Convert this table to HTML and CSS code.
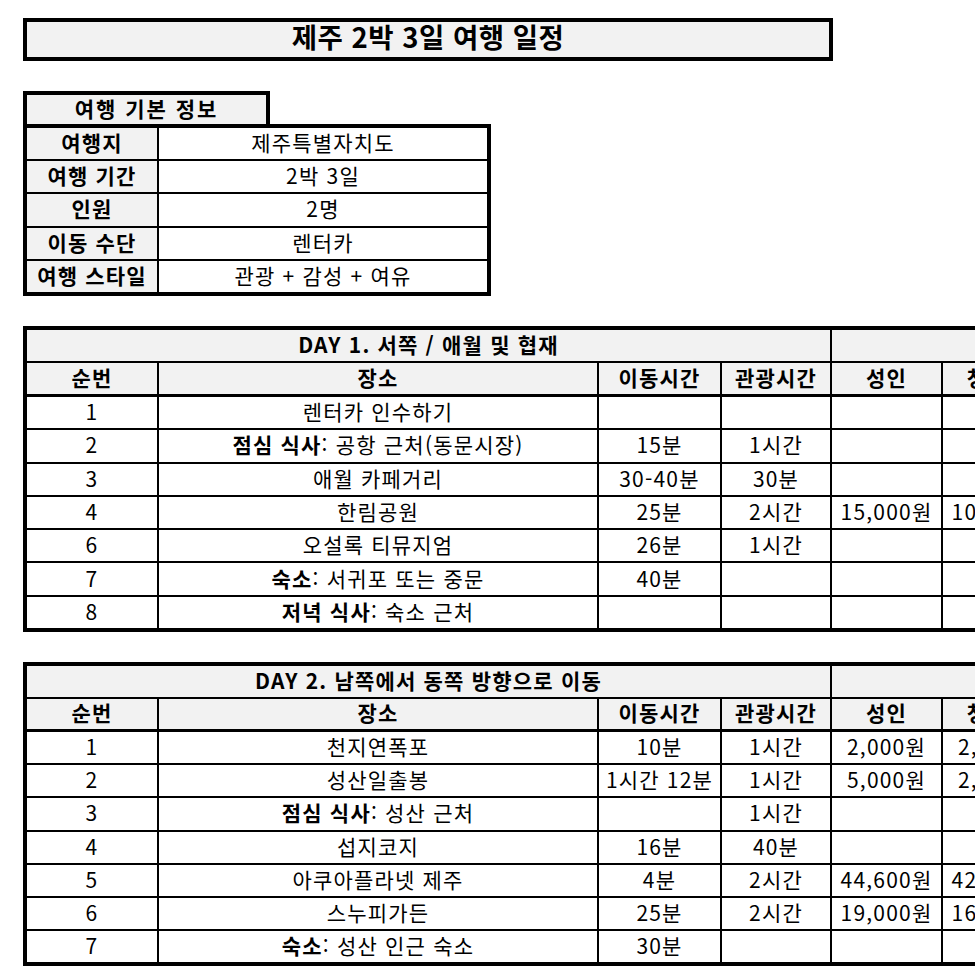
FILE: index.html
```html
<!DOCTYPE html>
<html lang="ko">
<head>
<meta charset="utf-8">
<title>제주 2박 3일 여행 일정</title>
<link rel="stylesheet" href="styles.css">
</head>
<body>
<div class="page">
  <div class="title">제주 2박 3일 여행 일정</div>

  <section class="info">
    <div class="info-head">여행 기본 정보</div>
    <div class="info-grid">
      <div class="cell lab">여행지</div><div class="cell">제주특별자치도</div>
      <div class="cell lab">여행 기간</div><div class="cell">2박 3일</div>
      <div class="cell lab">인원</div><div class="cell">2명</div>
      <div class="cell lab">이동 수단</div><div class="cell">렌터카</div>
      <div class="cell lab">여행 스타일</div><div class="cell">관광 + 감성 + 여유</div>
    </div>
  </section>

  <section class="day">
    <div class="cell hd day-title">DAY 1. 서쪽 / 애월 및 협재</div>
    <div class="cell hd day-fee"></div>
    <div class="cell hd colhd">순번</div><div class="cell hd colhd">장소</div><div class="cell hd colhd">이동시간</div><div class="cell hd colhd">관광시간</div><div class="cell hd colhd">성인</div><div class="cell hd colhd">청소년</div>

    <div class="cell">1</div><div class="cell">렌터카 인수하기</div><div class="cell"></div><div class="cell"></div><div class="cell"></div><div class="cell"></div>
    <div class="cell">2</div><div class="cell"><b>점심 식사</b>: 공항 근처(동문시장)</div><div class="cell">15분</div><div class="cell">1시간</div><div class="cell"></div><div class="cell"></div>
    <div class="cell">3</div><div class="cell">애월 카페거리</div><div class="cell">30-40분</div><div class="cell">30분</div><div class="cell"></div><div class="cell"></div>
    <div class="cell">4</div><div class="cell">한림공원</div><div class="cell">25분</div><div class="cell">2시간</div><div class="cell">15,000원</div><div class="cell">10,000원</div>
    <div class="cell">6</div><div class="cell">오설록 티뮤지엄</div><div class="cell">26분</div><div class="cell">1시간</div><div class="cell"></div><div class="cell"></div>
    <div class="cell">7</div><div class="cell"><b>숙소</b>: 서귀포 또는 중문</div><div class="cell">40분</div><div class="cell"></div><div class="cell"></div><div class="cell"></div>
    <div class="cell">8</div><div class="cell"><b>저녁 식사</b>: 숙소 근처</div><div class="cell"></div><div class="cell"></div><div class="cell"></div><div class="cell"></div>
  </section>

  <section class="day day-two">
    <div class="cell hd day-title">DAY 2. 남쪽에서 동쪽 방향으로 이동</div>
    <div class="cell hd day-fee"></div>
    <div class="cell hd colhd">순번</div><div class="cell hd colhd">장소</div><div class="cell hd colhd">이동시간</div><div class="cell hd colhd">관광시간</div><div class="cell hd colhd">성인</div><div class="cell hd colhd">청소년</div>

    <div class="cell">1</div><div class="cell">천지연폭포</div><div class="cell">10분</div><div class="cell">1시간</div><div class="cell">2,000원</div><div class="cell">2,000원</div>
    <div class="cell">2</div><div class="cell">성산일출봉</div><div class="cell">1시간 12분</div><div class="cell">1시간</div><div class="cell">5,000원</div><div class="cell">2,500원</div>
    <div class="cell">3</div><div class="cell"><b>점심 식사</b>: 성산 근처</div><div class="cell"></div><div class="cell">1시간</div><div class="cell"></div><div class="cell"></div>
    <div class="cell">4</div><div class="cell">섭지코지</div><div class="cell">16분</div><div class="cell">40분</div><div class="cell"></div><div class="cell"></div>
    <div class="cell">5</div><div class="cell">아쿠아플라넷 제주</div><div class="cell">4분</div><div class="cell">2시간</div><div class="cell">44,600원</div><div class="cell">42,600원</div>
    <div class="cell">6</div><div class="cell">스누피가든</div><div class="cell">25분</div><div class="cell">2시간</div><div class="cell">19,000원</div><div class="cell">16,000원</div>
    <div class="cell">7</div><div class="cell"><b>숙소</b>: 성산 인근 숙소</div><div class="cell">30분</div><div class="cell"></div><div class="cell"></div><div class="cell"></div>
  </section>
</div>
</body>
</html>
```

FILE: styles.css
```css
html, body {
  margin: 0;
  padding: 0;
  background: #fff;
  overflow: hidden;
}
body {
  font-family: "Noto Sans CJK KR", "Noto Sans", sans-serif;
  color: #000;
}
.page {
  padding: 18px 0 0 23px;
  width: 1100px;
}
.title {
  width: 802px;
  height: 35px;
  border: 4px solid #000;
  background: #f2f2f2;
  font-weight: bold;
  font-size: 27.5px;
  line-height: 29px;
  text-align: center;
  letter-spacing: 0.5px;
}
.info {
  margin-top: 30px;
}
.info-head {
  width: 239px;
  height: 29px;
  border: 4px solid #000;
  border-bottom: 0;
  background: #f2f2f2;
  font-weight: bold;
  font-size: 21px;
  line-height: 27px;
  text-align: center;
  letter-spacing: 2px;
}
.info-grid {
  display: grid;
  width: 460px;
  grid-template-columns: 130px 328px;
  grid-template-rows: repeat(5, 31.2px);
  gap: 2px;
  padding: 4px;
  background: #000;
}
.cell {
  background: #fff;
  display: flex;
  align-items: center;
  justify-content: center;
  padding-bottom: 3px;
  font-size: 21px;
  letter-spacing: 1.2px;
  white-space: nowrap;
  overflow: hidden;
}
.cell b {
  font-weight: bold;
}
.lab {
  background: #f2f2f2;
  font-weight: bold;
}
.day {
  margin-top: 30px;
  display: grid;
  width: 1025px;
  grid-template-columns: 130px 438px 121px 108px 109px 109px;
  grid-template-rows: 31px 32px repeat(7, 31.3px);
  gap: 2px;
  padding: 4px;
  background: #000;
}
.day-two {
  grid-template-rows: 30.5px 31.5px repeat(7, 31.2px);
}
.hd {
  background: #f2f2f2;
  font-weight: bold;
}
.colhd {
  margin-bottom: 1px;
}
.day-title {
  grid-column: 1 / 5;
}
.day-fee {
  grid-column: 5 / 7;
}
```
